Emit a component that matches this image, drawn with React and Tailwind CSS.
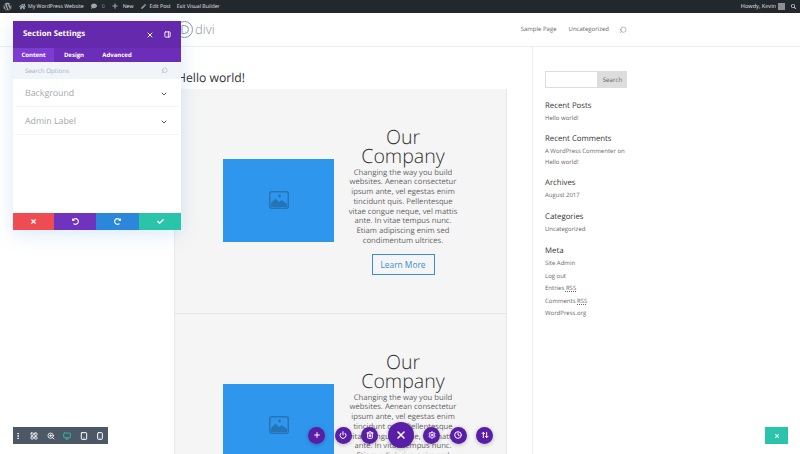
import React from "react";
import { FaWordpress, FaComment, FaPlus, FaPencilAlt, FaTimes, FaCheck, FaUndoAlt, FaRedoAlt, FaSearch, FaHome } from "react-icons/fa";
import { X, Plus, Power, Trash2, Settings, Clock, ArrowUpDown, Search, ChevronDown, PanelRight, LayoutGrid, MoreVertical, ZoomIn, Monitor, Tablet, Smartphone } from "lucide-react";

const sans = "font-['Open_Sans',sans-serif] [text-rendering:geometricPrecision]";

function ImagePlaceholder() {
  return (
    <div className="w-[111px] h-[83px] shrink-0 bg-[#2f96ee] flex items-center justify-center">
      <svg width="20" height="18" viewBox="0 0 20 18">
        <rect x="0.75" y="0.75" width="18.5" height="16.5" rx="2" fill="none" stroke="#2674b8" strokeWidth="1.5" />
        <circle cx="10.5" cy="5" r="1.4" fill="#2674b8" />
        <path d="M2 16 L2 12 L6.5 7.5 L10 11 L13 9 L18 13 L18 16 Z" fill="#2674b8" />
      </svg>
    </div>
  );
}

function Section() {
  return (
    <section className="h-[224px] mb-px pb-[2px] bg-[#f5f5f5] border-x border-[#e8e8e8] shadow-[0_1px_0_#e6e6e6] flex items-center pl-[48px] shrink-0">
      <ImagePlaceholder />
      <div className="w-[136px] ml-[1px] mt-[2px] flex flex-col items-center text-center">
        <h2 className="text-[19.6px] leading-[19px] font-light text-[#333]">Our<br />Company</h2>
        <p className="mt-[4px] text-[7.7px] leading-[9.7px] text-[#666] w-[113px]">
          Changing the way you build websites. Aenean consectetur ipsum ante, vel egestas enim tincidunt quis. Pellentesque vitae congue neque, vel mattis ante. In vitae tempus nunc. Etiam adipiscing enim sed condimentum ultrices.
        </p>
        <button className="mt-[8px] w-[63px] h-[21px] border-[1.5px] border-[#3a8fd6] text-[8.4px] text-[#3a8fd6] flex items-center justify-center">Learn More</button>
      </div>
    </section>
  );
}

function Widget({ title, items, className = "" }) {
  return (
    <div className={className}>
      <h4 className="text-[7.8px] leading-[11px] text-[#333]">{title}</h4>
      <div className="mt-[2px] flex flex-col gap-[3.5px]">
        {items.map((it, i) => (
          <div key={i} className="text-[6px] leading-[9px] text-[#666]">{it}</div>
        ))}
      </div>
    </div>
  );
}

function Fab({ icon: Icon, big }) {
  return (
    <div className={`rounded-full bg-[#5a1ea6] flex items-center justify-center text-white shadow-[0_1px_4px_rgba(0,0,0,0.25)] ${big ? "w-[26px] h-[26px]" : "w-[17px] h-[17px]"}`}>
      <Icon size={big ? 12 : 8} strokeWidth={3} />
    </div>
  );
}

export default function App() {
  return (
    <div className={`relative w-[800px] h-[454px] overflow-hidden bg-white ${sans}`}>
      {/* admin bar */}
      <div className="h-[13px] bg-[#23282d] text-[#e4e6e7] text-[5.2px] flex items-center pl-[3px] pr-[4px]">
        <FaWordpress size={9} className="text-[#a0a5aa]" />
        <span className="flex items-center gap-[2px] ml-[7px]"><FaHome size={7} className="text-[#a0a5aa]" />My WordPress Website</span>
        <span className="flex items-center gap-[5px] ml-[7px]"><FaComment size={6} className="text-[#a0a5aa]" /><span className="text-[#a0a5aa]">0</span></span>
        <span className="flex items-center gap-[5px] ml-[7px]"><FaPlus size={6} className="text-[#a0a5aa]" />New</span>
        <span className="flex items-center gap-[4px] ml-[7px]"><FaPencilAlt size={5} className="text-[#a0a5aa]" />Edit Post</span>
        <span className="ml-[6px]">Exit Visual Builder</span>
        <span className="ml-auto flex items-center gap-[2px] text-[5.6px]">Howdy, Kevin
          <span className="w-[7px] h-[7px] bg-[#8a8f94] block" />
        </span>
        <FaSearch size={5} className="text-[#c9cccf] ml-[6px]" />
      </div>

      {/* header */}
      <header className="h-[34px] border-b border-[#eeeeee] flex items-center pl-[176px] pr-[173px]">
        <svg width="17" height="17" viewBox="0 0 17 17" fill="none" stroke="#8f9aa3" strokeWidth="1">
          <circle cx="8.5" cy="8.5" r="8" />
          <path d="M6 4.5 H8.5 A4 4 0 0 1 8.5 12.5 H6 Z" />
        </svg>
        <span className="ml-[2px] text-[13px] leading-none text-[#8a949c] font-light">divi</span>
        <nav className="ml-auto flex items-center text-[6px] text-[#666]">
          <span>Sample Page</span>
          <span className="ml-[12px]">Uncategorized</span>
          <Search size={8} className="ml-[10px] text-[#777] -scale-x-100" strokeWidth={1.5} />
        </nav>
      </header>

      {/* body */}
      <div className="flex">
        <main className="w-[533px] shrink-0 pl-[174px] pr-[25px] border-r border-[#eeeeee] h-[407px] overflow-hidden">
          <h1 className="pl-[3px] mt-[22px] h-[20px] text-[12.2px] leading-[18px] text-[#333]">Hello world!</h1>
          <Section />
          <Section />
        </main>
        <aside className="pl-[12px] pt-[24px] w-[95px]">
          <div className="flex h-[17px] w-[82px]">
            <div className="w-[53px] border border-[#ddd] bg-white" />
            <div className="flex-1 bg-[#ddd] text-[6.2px] text-[#666] flex items-center justify-center">Search</div>
          </div>
          <Widget className="mt-[13px]" title="Recent Posts" items={["Hello world!"]} />
          <div className="mt-[11px]">
            <h4 className="text-[7.8px] leading-[11px] text-[#333]">Recent Comments</h4>
            <div className="mt-[1px] text-[6px] leading-[11px] text-[#666] w-[84px]">A WordPress Commenter on Hello world!</div>
          </div>
          <Widget className="mt-[10px]" title="Archives" items={["August 2017"]} />
          <Widget className="mt-[12px]" title="Categories" items={["Uncategorized"]} />
          <Widget className="mt-[12px]" title="Meta" items={["Site Admin", "Log out", <>Entries <u className="decoration-dotted">RSS</u></>, <>Comments <u className="decoration-dotted">RSS</u></>, "WordPress.org"]} />
        </aside>
      </div>

      {/* settings panel */}
      <div className="absolute left-[13px] top-[21px] w-[168px] h-[209px] bg-white flex flex-col shadow-[0_4px_18px_rgba(43,135,218,0.18)]">
        <div className="h-[27px] bg-[#6529ae] text-white flex items-center pl-[10px] pr-[10px] shrink-0">
          <span className="text-[7.8px] font-bold">Section Settings</span>
          <X size={8} strokeWidth={3} className="ml-auto" />
          <PanelRight size={7} strokeWidth={3} className="ml-[10px]" />
        </div>
        <div className="h-[14px] bg-[#6c2eb9] text-white text-[6px] font-bold flex items-stretch shrink-0">
          <span className="w-[41px] bg-[#7d3bd1] flex items-center justify-center">Content</span>
          <span className="w-[40px] flex items-center justify-center">Design</span>
          <span className="w-[46px] flex items-center justify-center">Advanced</span>
        </div>
        <div className="h-[17px] bg-[#f1f5f9] text-[#a3b0bd] text-[6.2px] flex items-center pl-[12px] pr-[13px] shrink-0">
          <span>Search Options</span>
          <Search size={7} className="ml-auto -scale-x-100" />
        </div>
        {["Background", "Admin Label"].map((t) => (
          <div key={t} className="h-[28px] mx-[2px] border-b border-[#f4f4f4] flex items-center pt-[3px] pl-[10px] pr-[11px] text-[8.8px] text-[#a3a8ad] shrink-0">
            <span>{t}</span>
            <ChevronDown size={8} strokeWidth={3} className="ml-auto text-[#4c5866]" />
          </div>
        ))}
        <div className="mt-auto h-[17px] flex text-white">
          <div className="w-[41px] bg-[#ef4b53] flex items-center justify-center"><FaTimes size={7} /></div>
          <div className="w-[42px] bg-[#7033bf] flex items-center justify-center"><FaUndoAlt size={7} /></div>
          <div className="w-[43px] bg-[#2b87da] flex items-center justify-center"><FaRedoAlt size={7} /></div>
          <div className="w-[42px] bg-[#29c4a9] flex items-center justify-center"><FaCheck size={7} /></div>
        </div>
      </div>

      {/* left view toolbar */}
      <div className="absolute left-[13px] top-[427px] w-[95px] h-[17px] bg-[#4c5866] flex items-center text-white pl-[1px] pr-[4px] justify-between">
        <MoreVertical size={8} strokeWidth={3} />
        <LayoutGrid size={8} strokeWidth={2.5} />
        <ZoomIn size={8} strokeWidth={2.5} />
        <Monitor size={8} strokeWidth={2.5} className="text-[#29c4a9]" />
        <Tablet size={8} strokeWidth={3} />
        <Smartphone size={8} strokeWidth={3} />
      </div>

      {/* bottom center toolbar */}
      <div className="absolute left-[308px] top-[422px] w-[185px] h-[26px] flex items-center justify-between">
        <Fab icon={Plus} />
        <Fab icon={Power} />
        <Fab icon={Trash2} />
        <Fab icon={X} big />
        <Fab icon={Settings} />
        <Fab icon={Clock} />
        <Fab icon={ArrowUpDown} />
      </div>

      {/* right exit button */}
      <div className="absolute left-[765px] top-[427px] w-[23px] h-[17px] bg-[#29c4a9] flex items-center justify-center text-white">
        <FaTimes size={6} />
      </div>
    </div>
  );
}
